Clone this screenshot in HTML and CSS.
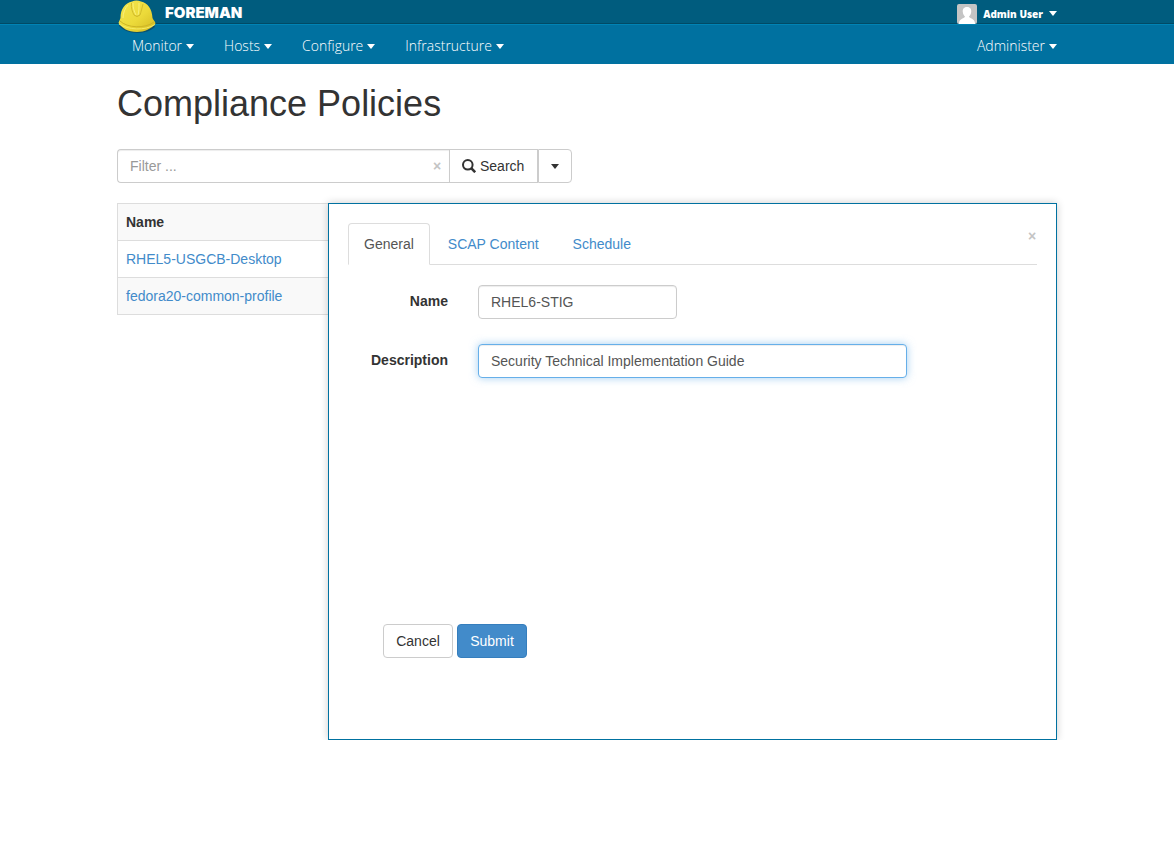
FILE: index.html
```html
<!DOCTYPE html>
<html lang="en">
<head>
<meta charset="utf-8">
<title>Compliance Policies</title>
<link rel="stylesheet" href="styles.css">
</head>
<body>
<header>
  <div class="topbar">
    <div class="container bar-row">
      <a class="brand" href="#">
        <svg class="helmet" viewBox="0 0 40 34" aria-hidden="true">
          <defs>
            <linearGradient id="dome" x1="0" y1="0" x2="1" y2="1">
              <stop offset="0" stop-color="#f3e650"/>
              <stop offset="0.55" stop-color="#ecda3a"/>
              <stop offset="1" stop-color="#d2b820"/>
            </linearGradient>
          </defs>
          <path d="M3 23C10 33 29 34 37 24L38 27C30 35 10 35 2 26Z" fill="#123c4c" opacity=".6"/>
          <path d="M1.500 23C2 21 3 20 3.500 18C3.500 9 8 3 15 1.500C18 .2 21 .3 24 1.500C31 3 35 9 35.500 18C36 20 38 21 38.500 23.500C34 29 28 32 20 32C11 32 5 28 1.500 23Z" fill="url(#dome)"/>
          <path d="M3 21C10 28 28 29 37 22" fill="none" stroke="#cdb526" stroke-width="1"/>
          <path d="M2 24C11 30 28 31 38 24.500" fill="none" stroke="#f8ec66" stroke-width="1"/>
          <path d="M14.500 3C14 8 15 11 17 15M26 4C25 8 24 12 23 15" fill="none" stroke="#d3bd2b" stroke-width="1"/>
          <path d="M11 5C8 8 6 13 6 18M16 3C16 8 17 11 19 15M22 3C22 8 22 11 21 15" fill="none" stroke="#fbf487" stroke-width="1" opacity=".8"/>
          <path d="M17 15Q20 18 23 15" fill="none" stroke="#cfb728"/>
        </svg>
        <span>FOREMAN</span>
      </a>
      <button class="user" type="button">
        <svg class="avatar" viewBox="0 0 20 20" aria-hidden="true">
          <rect width="20" height="20" rx="2" fill="#c4c4c4"/>
          <path d="M10 3C6.500 3 5.500 5.500 5.800 8C6 10 7 11.500 8 12.500C7.500 14.500 2.500 14.500 2 19V20H18V19C17.500 14.500 12.500 14.500 12 12.500C13 11.500 14 10 14.200 8C14.500 5.500 13.500 3 10 3Z" fill="#fff"/>
        </svg>
        Admin User
        <span class="caret"></span>
      </button>
    </div>
  </div>
  <nav class="menubar">
    <div class="container bar-row">
      <ul class="menu">
        <li><a href="#">Monitor<span class="caret"></span></a></li>
        <li><a href="#">Hosts<span class="caret"></span></a></li>
        <li><a href="#">Configure<span class="caret"></span></a></li>
        <li><a href="#">Infrastructure<span class="caret"></span></a></li>
      </ul>
      <a class="administer" href="#">Administer<span class="caret"></span></a>
    </div>
  </nav>
</header>

<main class="container">
  <h1>Compliance Policies</h1>
  <form class="search">
    <input class="control filter" type="text" placeholder="Filter ..." aria-label="Filter">
    <button class="close clear" type="button" aria-label="Clear filter">×</button>
    <button class="btn search-btn" type="button">
      <svg class="glass" viewBox="0 0 14 14" aria-hidden="true"><circle cx="5.800" cy="5.800" r="4.800" fill="none" stroke="currentColor" stroke-width="2"/><path d="M9.200 9.200L13.200 13.200" stroke="currentColor" stroke-width="2.600"/></svg>
      Search
    </button>
    <button class="btn toggle" type="button" aria-label="Search options"><span class="caret"></span></button>
  </form>

  <div class="workspace">
    <table class="policies">
      <thead><tr><th>Name</th></tr></thead>
      <tbody>
        <tr><td><a href="#">RHEL5-USGCB-Desktop</a></td></tr>
        <tr><td><a href="#">fedora20-common-profile</a></td></tr>
      </tbody>
    </table>

    <section class="panel">
      <div class="tabs">
        <a class="tab active" href="#">General</a>
        <a class="tab" href="#">SCAP Content</a>
        <a class="tab" href="#">Schedule</a>
        <button class="close dismiss" type="button" aria-label="Close">×</button>
      </div>
      <form>
        <div class="fields">
          <label for="name">Name</label>
          <input class="control short" id="name" type="text" value="RHEL6-STIG">
          <label for="description">Description</label>
          <input class="control focused" id="description" type="text" value="Security Technical Implementation Guide">
        </div>
        <div class="actions">
          <button class="btn" type="button">Cancel</button>
          <button class="btn primary" type="button">Submit</button>
        </div>
      </form>
    </section>
  </div>
</main>
</body>
</html>
```
FILE: styles.css
```css
* { box-sizing: border-box; }
body {
  margin: 0;
  background: #fff;
  color: #333;
  font: 14px/20px "Liberation Sans", Arial, sans-serif;
}
a { color: #428bca; text-decoration: none; }
button, input { font: inherit; }
button { cursor: pointer; }

.container { max-width: 970px; margin: 0 auto; padding: 0 15px; }
.bar-row { display: flex; justify-content: space-between; align-items: center; }
.caret {
  display: inline-block;
  border: 4px solid transparent;
  border-top: 5px solid currentColor;
  border-bottom: 0;
  vertical-align: middle;
}

.topbar { height: 24px; background: #005c7e; border-bottom: 1px solid #004a66; }
.brand {
  display: flex;
  gap: 8px;
  height: 24px;
  color: #fff;
  font: 900 15px/26px Inter, sans-serif;
}
.helmet { width: 40px; height: 34px; position: relative; z-index: 1; }
.user {
  display: flex;
  align-items: center;
  gap: 6px;
  height: 24px;
  padding: 3px 0 0;
  border: 0;
  background: none;
  color: #fff;
  font: 800 10px/20px "Open Sans", sans-serif;
}
.avatar { width: 20px; height: 20px; }

.menubar { background: #0071a0; border-top: 1px solid #0083b5; font: 300 14px/20px "Open Sans", sans-serif; }
.menubar .bar-row { height: 39px; padding-top: 2px; }
.menubar a { display: flex; align-items: center; gap: 4px; color: #fff; }
.menubar .caret { margin-top: 2px; }
.menu { display: flex; gap: 30px; margin: 0; padding: 0 15px; list-style: none; }

h1 { margin: 20px 0 25px; font-size: 36px; line-height: 40px; font-weight: 400; }

.control {
  width: 100%;
  height: 34px;
  padding: 6px 12px;
  border: 1px solid #ccc;
  border-radius: 4px;
  background: #fff;
  box-shadow: inset 0 1px 1px rgba(0, 0, 0, .075);
  color: #555;
  outline: 0;
}
.control::placeholder { color: #999; }
.focused { border-color: #66afe9; box-shadow: inset 0 1px 1px rgba(0, 0, 0, .075), 0 0 8px rgba(102, 175, 233, .6); }
.btn {
  min-width: 70px;
  height: 34px;
  padding: 6px 12px;
  border: 1px solid #ccc;
  border-radius: 4px;
  background: #fff;
  color: #333;
}
.primary { background: #428bca; border-color: #357ebd; color: #fff; }
.close { padding: 0; border: 0; background: none; color: #c4c4c4; font-weight: 700; }

.search { display: flex; max-width: 455px; margin-bottom: 20px; }
.filter { flex: 1; min-width: 0; padding-right: 24px; border-right: 0; border-radius: 4px 0 0 4px; }
.clear { width: 8px; margin: 0 8px 0 -16px; z-index: 1; }
.search-btn { display: flex; align-items: center; gap: 4px; min-width: 89px; border-radius: 0; }
.glass { width: 14px; height: 14px; }
.toggle { display: grid; place-items: center; min-width: 34px; border-radius: 0 4px 4px 0; }

.workspace { display: grid; grid-template-columns: 211px 1fr; }
.policies {
  grid-column: 1 / -1;
  grid-row: 1;
  align-self: start;
  border-collapse: collapse;
}
.policies th, .policies td { padding: 8px; border: 1px solid #ddd; text-align: left; }
.policies th, .policies tr:nth-child(even) { background: #f9f9f9; }

.panel {
  grid-column: 2;
  grid-row: 1;
  padding: 19px 19px 81px;
  border: 1px solid #0071a0;
  background: #fff;
  box-shadow: 0 0 8px rgba(0, 0, 0, .2);
  z-index: 1;
}
.tabs { display: flex; gap: 2px; border-bottom: 1px solid #ddd; }
.tab {
  padding: 10px 15px;
  margin-bottom: -1px;
  border: 1px solid transparent;
  border-radius: 4px 4px 0 0;
}
.active { border-color: #ddd #ddd #fff; background: #fff; color: #555; }
.dismiss { width: 8px; height: 20px; margin: 3px 1px 0 auto; }

.fields {
  display: grid;
  grid-template-columns: 100px minmax(0, 429px);
  gap: 25px 30px;
  min-height: 339px;
  padding-top: 20px;
  align-content: start;
}
.fields label { padding-top: 6px; text-align: right; font-weight: 700; }
.short { width: 199px; }
.actions { display: flex; gap: 4px; padding: 20px 35px 0; }
```
